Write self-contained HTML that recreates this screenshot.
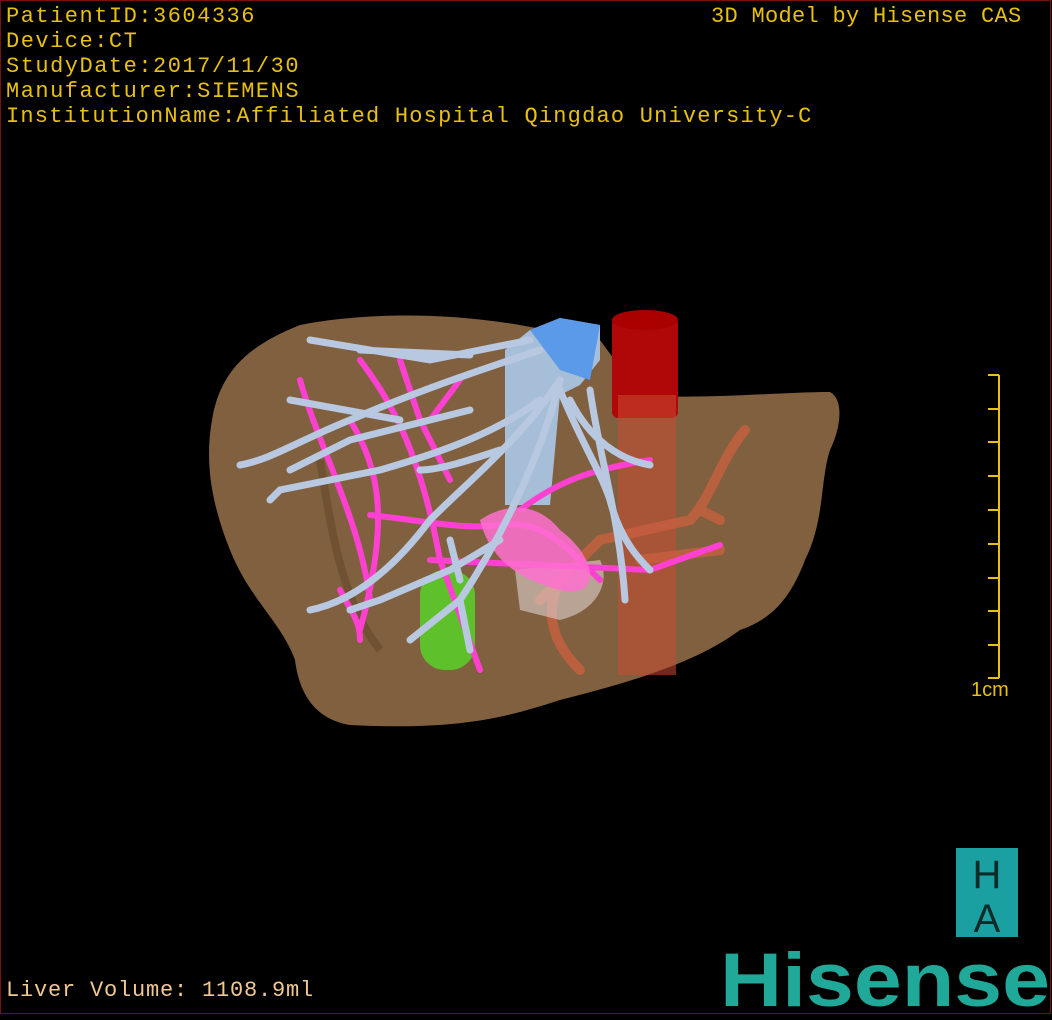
<!DOCTYPE html>
<html><head><meta charset="utf-8"><style>
html,body{margin:0;padding:0;background:#000;}
#w{position:relative;width:1052px;height:1020px;background:#000;overflow:hidden;}
.fr{position:absolute;left:0;top:0;width:1049px;height:1012px;border:1px solid #7a1010;}
.t{position:absolute;color:#e8c010;font-size:22px;line-height:25px;letter-spacing:1.5px;white-space:pre;font-family:"Liberation Mono","DejaVu Sans Mono",monospace;}
</style></head><body><div id="w">
<div class="fr"></div>
<div class="t" style="left:6px;top:4px;">PatientID:3604336
Device:CT
StudyDate:2017/11/30
Manufacturer:SIEMENS
<span style="letter-spacing:1.2px">InstitutionName:Affiliated Hospital Qingdao University-C</span></div>
<div class="t" style="left:711px;top:4px;letter-spacing:0.3px">3D Model by Hisense CAS</div>
<div class="t" style="left:6px;top:978px;color:#f0c890;letter-spacing:0.8px">Liver Volume: 1108.9ml</div>
<div class="t" style="left:971px;top:678px;font-family:'Liberation Sans',sans-serif;font-size:20px;letter-spacing:0">1cm</div>
<svg width="1052" height="1020" style="position:absolute;left:0;top:0">
<g stroke="#e8c010" stroke-width="2" fill="none">
<path d="M999 375V678"/>
<path d="M988 375H999M988 409H999M988 442H999M988 476H999M988 510H999M988 544H999M988 578H999M988 611H999M988 645H999M988 678H999"/>
</g>
<path d="M212 420 C220 370 250 345 300 325 C350 315 430 310 520 325 L600 340 L640 395 C700 400 780 392 830 392 C845 400 840 430 830 450 C820 480 825 520 805 560 C790 600 770 620 740 630 C700 660 640 680 560 700 C500 720 450 730 350 725 C320 720 300 700 295 660 C280 620 250 600 230 550 C210 500 205 460 212 420Z" fill="#80603e"/>
<path d="M320 460 C330 520 340 600 380 650" stroke="#5f4428" stroke-width="8" fill="none" opacity=".5"/>
<rect x="612" y="318" width="66" height="100" rx="6" fill="#b00808"/>
<ellipse cx="645" cy="320" rx="33" ry="10" fill="#a00"/>
<rect x="618" y="395" width="58" height="280" fill="#c84a30" opacity=".55"/>
<g stroke="#c86040" stroke-width="10" fill="none" stroke-linecap="round" opacity=".8">
<path d="M745 430 C720 460 710 500 690 520 L600 540 L560 580 C540 620 560 650 580 670"/>
<path d="M700 510 L720 520 M640 560 L720 550 M600 540 L540 600"/>
</g>
<path d="M505 350 L530 330 L560 318 L600 325 L600 360 L580 385 L560 395 L550 505 L505 505Z" fill="#a7bed8"/>
<path d="M530 330 L560 318 L600 325 L590 380 L560 370Z" fill="#5a9ae8"/>
<path d="M600 560 C610 580 600 610 560 620 L520 610 L515 570Z" fill="#e0d0d0" opacity=".6"/>
<rect x="420" y="570" width="55" height="100" rx="25" fill="#5ec02a"/>
<g stroke="#ff40d0" stroke-width="6" fill="none" stroke-linecap="round">
<path d="M370 515 C420 520 460 530 500 525 C540 520 560 540 600 580"/>
<path d="M430 560 L650 570 L720 545"/>
<path d="M520 510 C560 480 590 470 650 460"/>
<path d="M300 380 C320 450 360 520 370 600 M350 420 C380 470 390 520 360 630"/>
<path d="M360 360 C390 400 420 450 440 560 L480 670"/>
<path d="M400 360 L420 420 L450 480 M430 420 L460 380"/>
<path d="M340 590 C350 610 360 620 360 640"/>
</g>
<path d="M480 520 C510 500 540 505 560 530 C600 560 600 600 560 590 C520 580 490 560 480 520Z" fill="#ff70d0" opacity=".85"/>
<g stroke="#b8c8e0" stroke-width="7" fill="none" stroke-linecap="round">
<path d="M540 350 C480 370 420 390 350 420 C300 440 270 460 240 465"/>
<path d="M530 340 L430 360 L310 340 M470 355 L360 350"/>
<path d="M560 380 C520 440 470 480 430 520 C400 560 360 600 310 610"/>
<path d="M560 380 C540 460 500 540 460 600 L410 640"/>
<path d="M560 390 C580 440 600 470 610 500 C620 540 640 560 650 570"/>
<path d="M570 400 C590 440 620 460 650 465"/>
<path d="M590 390 C600 460 620 520 625 600"/>
<path d="M540 400 C500 430 450 450 380 470 L280 490 L270 500"/>
<path d="M400 420 L290 400 M470 410 L350 440 L290 470"/>
<path d="M460 600 L470 650 M500 540 L450 570 L380 600 L350 610"/>
<path d="M500 450 C470 460 440 470 420 470 M450 540 L460 580"/>
</g>
<rect x="956" y="848" width="62" height="89" fill="#1aa0a0"/>
<text x="987" y="888" text-anchor="middle" font-family="Liberation Sans,sans-serif" font-size="40" fill="#0b2a2a">H</text>
<text x="987" y="932" text-anchor="middle" font-family="Liberation Sans,sans-serif" font-size="40" fill="#0b2a2a">A</text>
<text x="720" y="1006" font-family="Liberation Sans,sans-serif" font-weight="bold" font-size="76" fill="#20a898" textLength="330" lengthAdjust="spacingAndGlyphs">Hisense</text>
</svg>
</div></body></html>
